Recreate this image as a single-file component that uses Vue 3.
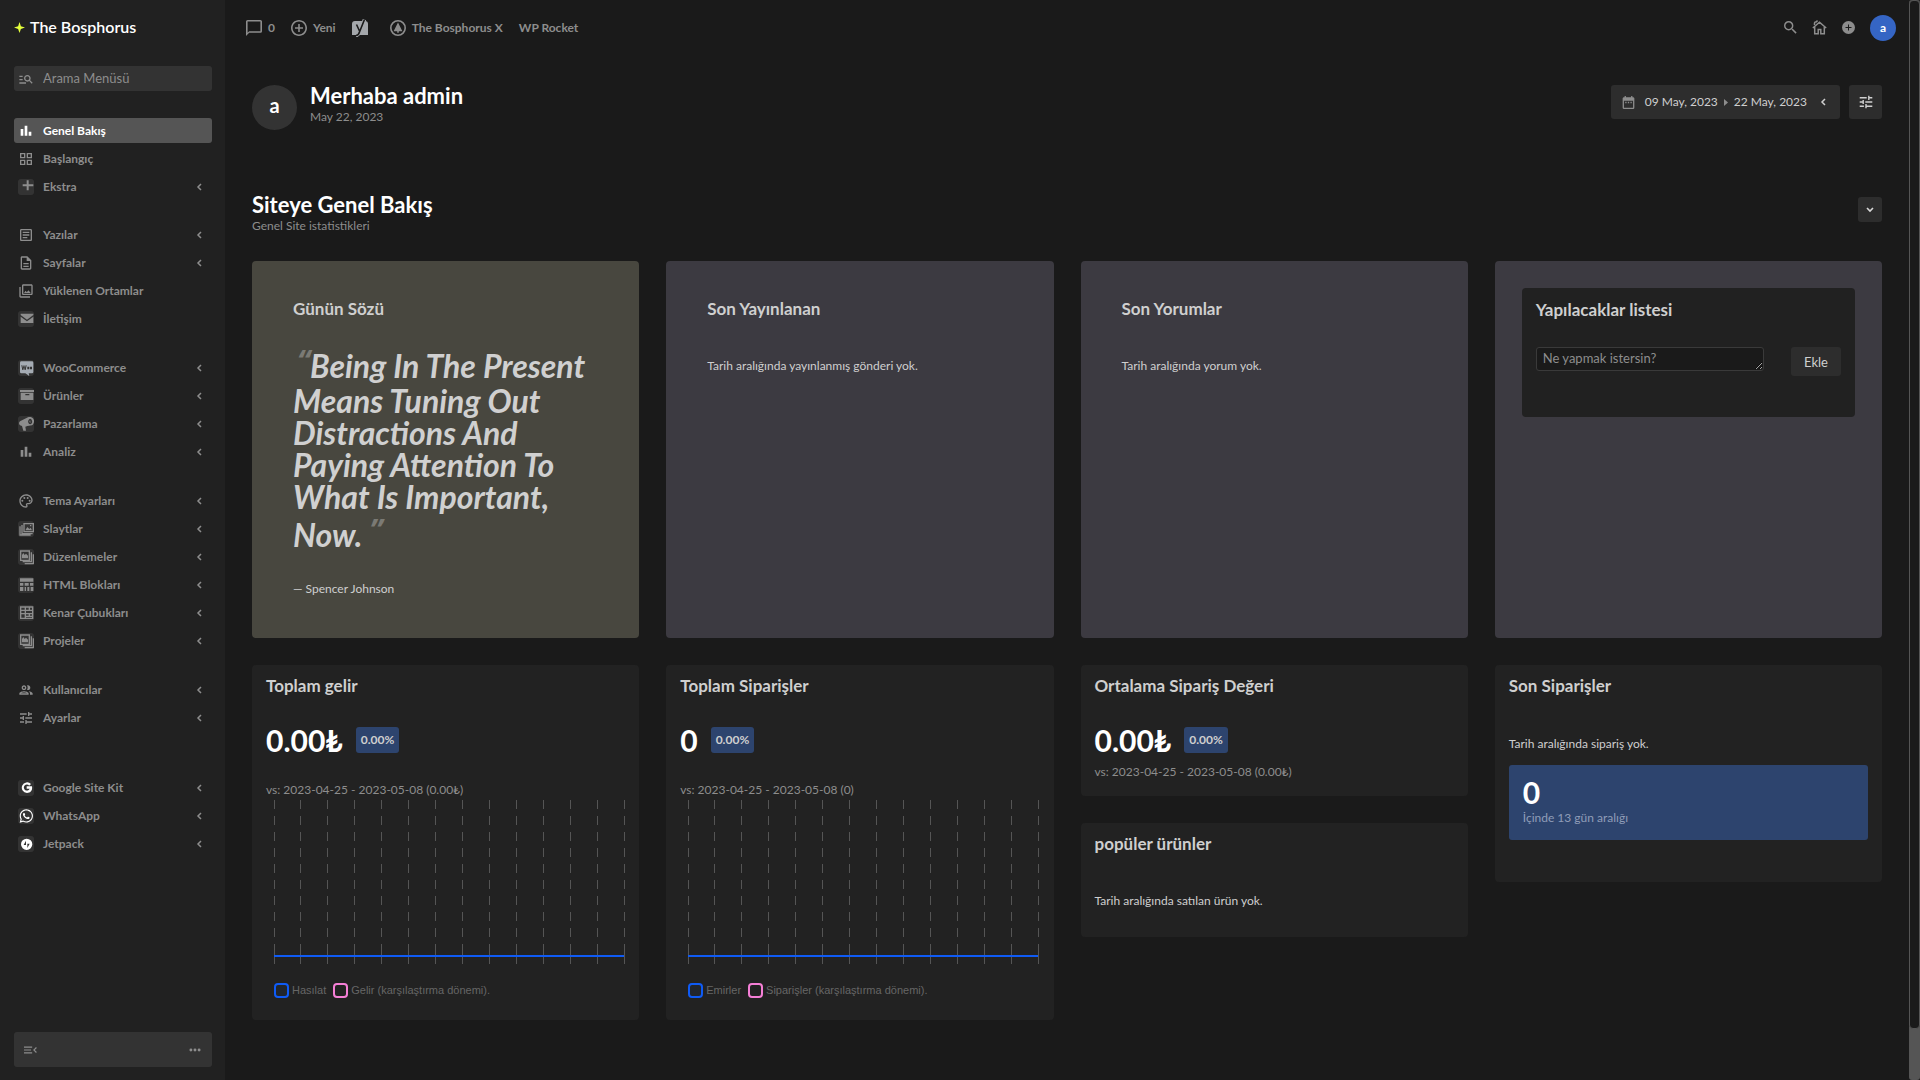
<script setup>
const icons = {
  bars: 'M4 9h4v10H4zM10 4h4v15h-4zM16 13h4v6h-4z',
  grid: 'M3 3v8h8V3H3zm6 6H5V5h4v4zm-6 4v8h8v-8H3zm6 6H5v-4h4v4zm4-16v8h8V3h-8zm6 6h-4V5h4v4zm-6 4v8h8v-8h-8zm6 6h-4v-4h4v4z',
  plus: 'M13 2h3v6h7v3h-7v6h-3v-6H7V8h6z',
  article: 'M19 5v14H5V5h14m0-2H5c-1.1 0-2 .9-2 2v14c0 1.1.9 2 2 2h14c1.1 0 2-.9 2-2V5c0-1.1-.9-2-2-2zM14 17H7v-2h7v2zm3-4H7v-2h10v2zm0-4H7V7h10v2z',
  page: 'M8 16h8v2H8zm0-4h8v2H8zm6-10H6c-1.1 0-2 .9-2 2v16c0 1.1.89 2 1.99 2H18c1.1 0 2-.9 2-2V8l-6-6zm4 18H6V4h7v5h5v11z',
  media: 'M20 4v12H8V4h12m0-2H8c-1.1 0-2 .9-2 2v12c0 1.1.9 2 2 2h12c1.1 0 2-.9 2-2V4c0-1.1-.9-2-2-2zm-8.5 9.67 1.69 2.26 2.48-3.1L19 15H9zM2 6v14c0 1.1.9 2 2 2h14v-2H4V6H2z',
  mail: 'M4 4h19v2l-9.500 7L4 6zM4 8.500l9.500 7 9.500-7V18H4z',
  woo: 'M5 2h16a2 2 0 0 1 2 2v14a2 2 0 0 1-2 2h-5l1 4-6-4H5a2 2 0 0 1-2-2V4a2 2 0 0 1 2-2zm0 6 1.500 7h1.500L9 11l1 4h1.500L13 8h-1.500l-1 4-1-4h-1l-1.200 4L6.500 8zm9 2v4h3v-4zm4 0v4h3v-4z',
  archive: 'M3 3h21v3H3zM4 7h19v11H4zM11 9v2h6V9z',
  horn: 'M3 8 15 2c2-1 6-1 8 2s1 8-2 10l-7 1-3 1 1 6H8l-2-7-3-1c-2-2-2-4 0-6zM18 4c-3 1-4 6-1 8 3 1 5-2 4-5-.5-2-1.500-3-3-3zm0 2 1 4-2-1z',
  palette: 'M12 22C6.49 22 2 17.51 2 12S6.49 2 12 2s10 4.04 10 9c0 3.31-2.690 6-6 6h-1.770c-.28 0-.5.22-.5.5 0 .12.05.23.13.33.41.47.64 1.060.64 1.670A2.500 2.500 0 0 1 12 22zm0-18c-4.410 0-8 3.590-8 8s3.590 8 8 8c.28 0 .5-.22.5-.5a.54.54 0 0 0-.14-.35c-.41-.46-.63-1.050-.63-1.650a2.500 2.500 0 0 1 2.500-2.500H16c2.210 0 4-1.790 4-4 0-3.860-3.590-7-8-7zM6.500 10a1.500 1.500 0 1 0 0 3 1.500 1.500 0 0 0 0-3zM9.500 6a1.500 1.500 0 1 0 0 3 1.500 1.500 0 0 0 0-3zM14.500 6a1.500 1.500 0 1 0 0 3 1.500 1.500 0 0 0 0-3zM17.500 10a1.500 1.500 0 1 0 0 3 1.500 1.500 0 0 0 0-3z',
  slides: 'M8 3h16v14H8zM10 5v10h12V5zM11 14l3-5 3 3 2-2 2 4zM18 6h2v2h-2zM5 6h2v12h15v2H5zM2 8h2v12h15v2H2z',
  gallery: 'M3 2h15v16H3zM5 4v12h11V4zM6 14V9l2-3 2 3 2-2 3 3v4zM19 5h2v15H7v-2h12zM22 8h2v15H10v-2h12z',
  blocks: 'M3 2h20v5H3zM3 9h5v4H3zM10 9h6v4h-6zM18 9h5v4h-5zM3 15h5v6H3zM10 15h2v6h-2zM14 15h3v6h-3zM19 15h4v6h-4z',
  widgets: 'M3 2h20v19H3zM5 4v3h5V4zM12 4v3h4V4zM18 4v3h3V4zM5 9v3h5V9zM12 9v3h9V9zM5 14v5h5v-5zM12 14v2h4v-2zM18 14v2h3v-2zM12 18v1h9v-1z',
  people: 'M9 13.750c-2.340 0-7 1.170-7 3.500V19h14v-1.750c0-2.330-4.660-3.500-7-3.500zM4.340 17c.84-.58 2.870-1.250 4.660-1.250s3.820.67 4.660 1.250H4.340zM9 12c1.930 0 3.500-1.570 3.500-3.500S10.930 5 9 5 5.500 6.570 5.500 8.500 7.070 12 9 12zm0-5c.83 0 1.500.67 1.500 1.500S9.830 10 9 10s-1.500-.67-1.500-1.500S8.170 7 9 7zm7.040 6.810c1.160.84 1.960 1.960 1.960 3.440V19h4v-1.750c0-2.020-3.500-3.170-5.960-3.440zM15 12c1.930 0 3.500-1.570 3.500-3.500S16.930 5 15 5c-.54 0-1.040.13-1.500.35.63.89 1 1.980 1 3.150s-.37 2.260-1 3.150c.46.22.96.35 1.500.35z',
  tune: 'M3 17v2h6v-2H3zM3 5v2h10V5H3zm10 16v-2h8v-2h-8v-2h-2v6h2zM7 9v2H3v2h4v2h2V9H7zm14 4v-2H11v2h10zm-6-4h2V7h4V5h-4V3h-2v6z',
  google: 'M13 9.500h8c1 6-2 10-7.500 10A8 8 0 1 1 19.500 6l-2.700 2.500a4.500 4.500 0 1 0 .7 4.500H13z',
  jetpack: 'M13 4a8.500 8.500 0 1 0 0 17 8.500 8.500 0 0 0 0-17zm-1 3v6.500H8.500zm2 11V11.500h3.500z',
  manageSearch: 'M7 9H2V7h5v2zm0 3H2v2h5v-2zm13.590 7-3.830-3.830c-.8.52-1.740.83-2.760.83-2.760 0-5-2.240-5-5s2.240-5 5-5 5 2.240 5 5c0 1.020-.31 1.960-.83 2.750L22 17.590 20.590 19zM17 11c0-1.650-1.350-3-3-3s-3 1.350-3 3 1.350 3 3 3 3-1.350 3-3zM2 19h10v-2H2v2z',
  whatsapp: 'M380.900 97.100C339 55.100 283.200 32 223.900 32c-122.400 0-222 99.600-222 222 0 39.100 10.200 77.300 29.600 111L0 480l117.700-30.900c32.400 17.700 68.900 27 106.100 27h.1c122.300 0 224.100-99.600 224.100-222 0-59.300-25.200-115-67.100-157zm-157 341.600c-33.200 0-65.700-8.900-94-25.700l-6.700-4-69.800 18.300L72 359.200l-4.400-7c-18.500-29.400-28.200-63.300-28.200-98.200 0-101.700 82.800-184.500 184.600-184.500 49.300 0 95.600 19.200 130.400 54.100 34.800 34.900 56.200 81.200 56.100 130.500 0 101.800-84.900 184.600-186.600 184.600zm101.200-138.200c-5.500-2.800-32.800-16.200-37.900-18-5.100-1.900-8.800-2.800-12.500 2.800-3.700 5.600-14.300 18-17.600 21.800-3.200 3.700-6.500 4.200-12 1.400-32.600-16.300-54-29.100-75.500-66-5.700-9.800 5.700-9.100 16.300-30.300 1.800-3.700.9-6.900-.5-9.700-1.400-2.800-12.500-30.100-17.100-41.200-4.500-10.800-9.100-9.300-12.500-9.500-3.200-.2-6.900-.2-10.600-.2-3.700 0-9.700 1.400-14.800 6.900-5.100 5.600-19.400 19-19.400 46.300 0 27.300 19.900 53.700 22.600 57.400 2.800 3.700 39.100 59.700 94.800 83.800 35.200 15.200 49 16.500 66.600 13.900 10.700-1.600 32.800-13.400 37.400-26.400 4.600-13 4.600-24.100 3.200-26.400-1.300-2.500-5-3.900-10.500-6.600z',
}

const item = (label, icon, extra = {}) => ({ label, icon, arrow: true, boxed: true, ...extra })
const plain = { boxed: false }
const groups = [
  [
    item('Genel Bakış', 'bars', { boxed: false, arrow: false, active: true }),
    item('Başlangıç', 'grid', { boxed: false, arrow: false }),
    item('Ekstra', 'plus'),
  ],
  [
    item('Yazılar', 'article', plain),
    item('Sayfalar', 'page', plain),
    item('Yüklenen Ortamlar', 'media', { boxed: false, arrow: false }),
    item('İletişim', 'mail', { arrow: false }),
  ],
  [
    item('WooCommerce', 'woo', { tint: 'pale' }),
    item('Ürünler', 'archive'),
    item('Pazarlama', 'horn'),
    item('Analiz', 'bars', plain),
  ],
  [
    item('Tema Ayarları', 'palette', plain),
    item('Slaytlar', 'slides'),
    item('Düzenlemeler', 'gallery'),
    item('HTML Blokları', 'blocks'),
    item('Kenar Çubukları', 'widgets'),
    item('Projeler', 'gallery'),
  ],
  [item('Kullanıcılar', 'people', plain), item('Ayarlar', 'tune', plain)],
  [
    item('Google Site Kit', 'google', { tint: 'white' }),
    item('WhatsApp', 'whatsapp', { tint: 'white', box: '-56 -14 540 540' }),
    item('Jetpack', 'jetpack', { tint: 'white' }),
  ],
]

const charts = [
  { title: 'Toplam gelir', value: '0.00₺', compare: 'vs: 2023-04-25 - 2023-05-08 (0.00₺)', legend: ['Hasılat', 'Gelir (karşılaştırma dönemi).'] },
  { title: 'Toplam Siparişler', value: '0', compare: 'vs: 2023-04-25 - 2023-05-08 (0)', legend: ['Emirler', 'Siparişler (karşılaştırma dönemi).'] },
]
const ticks = Array.from({ length: 14 }, (_, i) => (i / 13) * 100 + '%')
</script>

<template>
  <div class="app">
    <aside class="sidebar">
      <a href="#" class="logo">
        <svg width="11" height="11" viewBox="0 0 12 12"><path fill="#e4ff3c" d="M6 0 7.500 4.500 12 6 7.500 7.500 6 12 4.500 7.500 0 6 4.500 4.500z" /></svg>
        <span>The Bosphorus</span>
      </a>
      <label class="menu-search">
        <svg class="menu-ico" viewBox="0 0 24 24"><path :d="icons.manageSearch" /></svg>
        <input type="text" placeholder="Arama Menüsü" aria-label="Arama Menüsü" />
      </label>
      <nav class="menu">
        <ul v-for="(group, g) in groups" :key="g" class="group">
          <li v-for="entry in group" :key="entry.label">
            <a href="#" class="entry" :class="{ active: entry.active }">
              <span class="holder" :class="[{ boxed: entry.boxed }, entry.tint]">
                <svg class="menu-ico" :viewBox="entry.box || '0 0 24 24'">
                  <path fill-rule="evenodd" :d="icons[entry.icon]" />
                </svg>
              </span>
              <span class="entry-label">{{ entry.label }}</span>
              <svg v-if="entry.arrow" class="chev" viewBox="0 0 6 8"><path d="M5 1 2 4l3 3" /></svg>
            </a>
          </li>
        </ul>
      </nav>
      <div class="side-foot">
        <button type="button" aria-label="Menüyü daralt">
          <svg class="ico" viewBox="1 0 24 24"><path d="M1 18h14v-2H1v2zm0-5h12v-2H1v2zm0-7v2h14V6H1zm22 9.600L19.400 12 23 8.400 21.600 7l-5 5 5 5z" /></svg>
        </button>
        <button type="button" aria-label="Diğer">
          <svg class="ico" viewBox="0 0 24 24"><circle cx="5" cy="12" r="2.500" /><circle cx="12" cy="12" r="2.500" /><circle cx="19" cy="12" r="2.500" /></svg>
        </button>
      </div>
    </aside>

    <main class="main">
      <header class="topbar">
        <div class="top-left">
          <a href="#" class="top-link">
            <svg class="big" viewBox="2 2 20 20"><path d="M20 2H4c-1.100 0-2 .9-2 2v18l4-4h14c1.100 0 2-.9 2-2V4c0-1.100-.9-2-2-2zm0 14H6l-2 2V4h16v12z" /></svg>
            <span>0</span>
          </a>
          <a href="#" class="top-link">
            <svg class="big" viewBox="2 2 20 20"><path d="M13 7h-2v4H7v2h4v4h2v-4h4v-2h-4V7zm-1-5C6.480 2 2 6.480 2 12s4.480 10 10 10 10-4.480 10-10S17.520 2 12 2zm0 18c-4.410 0-8-3.590-8-8s3.590-8 8-8 8 3.590 8 8-3.590 8-8 8z" /></svg>
            <span>Yeni</span>
          </a>
          <a href="#" class="top-link yoast" aria-label="Yoast SEO">
            <svg class="tall" viewBox="0 0 16 18">
              <path fill="#a4a7ab" d="M3 2h10a3 3 0 0 1 3 3v11H0V5a3 3 0 0 1 3-3z" />
              <path fill="none" stroke="#a4a7ab" stroke-width="3.500" d="M12.500.5 7.500 13q-1 3.500-3.500 3.500" />
              <path fill="none" stroke="#1a1a1a" stroke-width="1.600" d="M4.500 5.500l3 6.500M12.500.5 7.500 13q-1 3.500-3.500 3.500" />
            </svg>
          </a>
          <a href="#" class="top-link">
            <svg class="big" viewBox="0 0 20 20">
              <circle cx="10" cy="10" r="9" fill="none" stroke="#8d8d8d" stroke-width="2" />
              <path d="M10 3 4.500 14H9v2h2v-2h4.500z" />
            </svg>
            <span>The Bosphorus X</span>
          </a>
          <a href="#" class="top-link">WP Rocket</a>
        </div>
        <div class="top-right">
          <button type="button" aria-label="Ara">
            <svg class="small" viewBox="3 3 18 18"><path d="M15.500 14h-.79l-.28-.27A6.470 6.470 0 0 0 16 9.500 6.500 6.500 0 1 0 9.500 16c1.610 0 3.090-.59 4.230-1.570l.27.28v.79l5 4.990L20.490 19l-4.990-5zm-6 0C7.010 14 5 11.990 5 9.500S7.010 5 9.500 5 14 7.010 14 9.500 11.990 14 9.500 14z" /></svg>
          </button>
          <a href="#" aria-label="Siteyi görüntüle">
            <svg class="home" viewBox="0 0 15 15"><path fill="none" stroke="#8d8d8d" stroke-width="1.500" d="M.8 8 7.500 2.200 14.200 8M2.700 7v6.800h3.500V9.500h2.600v4.300h3.500V7" /><path fill="none" stroke="#8d8d8d" stroke-width="1.500" d="M2.500 5V3q0-1 1-1t2-1.500" /></svg>
          </a>
          <button type="button" aria-label="Ekle">
            <svg class="small" viewBox="0 0 13 13"><circle cx="6.500" cy="6.500" r="6.500" /><path fill="#1a1a1a" d="M6 3.500h1V6h2.500v1H7v2.500H6V7H3.500V6H6z" /></svg>
          </button>
          <a href="#" class="user">a</a>
        </div>
      </header>

      <section class="welcome">
        <span class="avatar">a</span>
        <div class="welcome-text">
          <h1>Merhaba admin</h1>
          <p class="muted">May 22, 2023</p>
        </div>
        <button type="button" class="dates">
          <svg class="small" viewBox="3 2 18 20"><path fill="#8d8d8d" d="M9 11H7v2h2v-2zm4 0h-2v2h2v-2zm4 0h-2v2h2v-2zm2-7h-1V2h-2v2H8V2H6v2H5c-1.110 0-1.990.9-1.990 2L3 20a2 2 0 0 0 2 2h14c1.100 0 2-.9 2-2V6c0-1.100-.9-2-2-2zm0 16H5V9h14v11z" /><path fill="#8d8d8d" d="M4 5h16v4H4z" /></svg>
          <span class="range">
            <span>09 May, 2023</span>
            <svg width="4" height="7" viewBox="0 0 4 7"><path fill="#8d8d8d" d="M0 0l4 3.500L0 7z" /></svg>
            <span>22 May, 2023</span>
          </span>
          <svg class="chev" viewBox="0 0 6 8"><path d="M5 1 2 4l3 3" /></svg>
        </button>
        <button type="button" class="filter" aria-label="Filtreler">
          <svg class="ico" viewBox="2 2 20 20"><path fill="#d0d0d0" :d="icons.tune" /></svg>
        </button>
      </section>

      <section class="section-head">
        <div>
          <h2>Siteye Genel Bakış</h2>
          <p class="muted">Genel Site istatistikleri</p>
        </div>
        <button type="button" class="fold" aria-label="Bölümü daralt">
          <svg width="8" height="6" viewBox="0 0 8 6"><path fill="none" stroke="#d8d8d8" stroke-width="1.600" d="M1 1l3 3 3-3" /></svg>
        </button>
      </section>

      <section class="cards">
        <article class="tile quote">
          <h3>Günün Sözü</h3>
          <blockquote>
            <span class="first"><span class="mark open">“</span>Being In The Present</span>
            <span>Means Tuning Out</span>
            <span>Distractions And</span>
            <span>Paying Attention To</span>
            <span>What Is Important,</span>
            <span class="last">Now. <span class="mark">”</span></span>
          </blockquote>
          <p>— Spencer Johnson</p>
        </article>
        <article class="tile">
          <h3>Son Yayınlanan</h3>
          <p>Tarih aralığında yayınlanmış gönderi yok.</p>
        </article>
        <article class="tile">
          <h3>Son Yorumlar</h3>
          <p>Tarih aralığında yorum yok.</p>
        </article>
        <article class="tile todo">
          <form class="todo-box" @submit.prevent>
            <h3>Yapılacaklar listesi</h3>
            <div class="todo-row">
              <textarea rows="1" placeholder="Ne yapmak istersin?" aria-label="Ne yapmak istersin?"></textarea>
              <button type="submit">Ekle</button>
            </div>
          </form>
        </article>

        <article v-for="chart in charts" :key="chart.title" class="panel">
          <h3>{{ chart.title }}</h3>
          <div class="figure"><strong>{{ chart.value }}</strong><span class="badge">0.00%</span></div>
          <p class="muted spaced">{{ chart.compare }}</p>
          <div class="chart">
            <svg class="plot" width="100%" height="164">
              <g v-for="x in ticks" :key="x" class="tick">
                <line class="dashed" :x1="x" :x2="x" y1="0" y2="153" />
                <line :x1="x" :x2="x" y1="153" y2="164" />
              </g>
              <line class="series" x1="0" x2="100%" y1="156" y2="156" />
            </svg>
            <ul class="legend">
              <li><i class="swatch blue"></i>{{ chart.legend[0] }}</li>
              <li><i class="swatch pink"></i>{{ chart.legend[1] }}</li>
            </ul>
          </div>
        </article>

        <div class="stack">
          <article class="panel average">
            <h3>Ortalama Sipariş Değeri</h3>
            <div class="figure"><strong>0.00₺</strong><span class="badge">0.00%</span></div>
            <p class="muted">vs: 2023-04-25 - 2023-05-08 (0.00₺)</p>
          </article>
          <article class="panel popular">
            <h3>popüler ürünler</h3>
            <p>Tarih aralığında satılan ürün yok.</p>
          </article>
        </div>

        <article class="panel orders">
          <h3>Son Siparişler</h3>
          <p>Tarih aralığında sipariş yok.</p>
          <div class="total">
            <strong>0</strong>
            <p>İçinde 13 gün aralığı</p>
          </div>
        </article>
      </section>
    </main>

    <div class="scroll" aria-hidden="true"><div class="thumb"></div></div>
  </div>
</template>

<style>
body {
  background: #1a1a1a;
}
</style>

<style scoped>
* {
  box-sizing: border-box;
  margin: 0;
  padding: 0;
}
.app {
  display: flex;
  min-height: 100vh;
  background: #1a1a1a;
  color: #cfcfcf;
  font: 12px/18px Lato, "Noto Sans", sans-serif;
}
a {
  color: inherit;
  text-decoration: none;
}
ul {
  list-style: none;
}
button {
  border: 0;
  background: none;
  color: inherit;
  font: inherit;
}
svg {
  display: block;
  flex: none;
  fill: currentColor;
}
.muted {
  color: #8d8d8d;
}

.sidebar {
  display: flex;
  flex: none;
  flex-direction: column;
  width: 225px;
  padding: 17px 13px 13px 14px;
  background: #212121;
  color: #8d8d8d;
}
.logo {
  display: flex;
  align-items: center;
  gap: 5px;
  height: 20px;
  color: #fff;
  font-size: 16px;
  font-weight: 600;
}
.menu-search {
  display: flex;
  align-items: center;
  height: 25px;
  margin-top: 29px;
  padding-left: 4px;
  border-radius: 3px;
  background: #333;
}
.menu-search input {
  width: 100%;
  height: 21px;
  margin: 0 0 2px 9px;
  border: 0;
  outline: 0;
  background: none;
  color: #8d8d8d;
  font: 13px/18px Lato, "Noto Sans", sans-serif;
}
input::placeholder,
textarea::placeholder {
  color: #8d8d8d;
  opacity: 1;
}
.ico {
  width: 14px;
  height: 14px;
}
.small {
  width: 13px;
  height: 13px;
}
.menu-ico {
  width: 16px;
  height: 16px;
}
.menu {
  display: flex;
  flex-direction: column;
  gap: 24px;
  margin-top: 27px;
}
.group {
  display: flex;
  flex-direction: column;
  gap: 3px;
}
.group:first-child {
  margin-bottom: -1px;
}
.group:last-child {
  margin-top: 21px;
}
.entry {
  display: flex;
  align-items: center;
  height: 25px;
  padding: 0 10px 0 4px;
  border-radius: 3px;
  font-size: 12px;
  font-weight: 700;
}
.entry.active {
  background: #555;
  color: #fff;
}
.entry-label {
  flex: 1;
  margin-left: 9px;
}
.holder {
  border-radius: 3px;
}
.boxed {
  background: #333;
}
.pale {
  color: #a4abb3;
}
.white {
  color: #fff;
}
.chev {
  width: 6px;
  height: 8px;
  fill: none;
  stroke: currentColor;
  stroke-width: 1.5;
}
.side-foot {
  display: flex;
  align-items: center;
  justify-content: space-between;
  height: 35px;
  margin-top: auto;
  padding: 0 10px;
  border-radius: 3px;
  background: #333;
}

.main {
  flex: 1;
  min-width: 0;
  padding: 0 27px 40px;
}
.topbar {
  display: flex;
  align-items: center;
  justify-content: space-between;
  height: 55px;
  margin: 0 -14px 0 -6px;
  color: #8d8d8d;
  font-size: 12px;
  font-weight: 700;
}
.top-left,
.top-right,
.top-link {
  display: flex;
  align-items: center;
}
.top-left {
  gap: 16px;
}
.top-link {
  gap: 6px;
}
.yoast {
  margin-right: 6px;
}
.big {
  width: 16px;
  height: 16px;
}
.tall {
  width: 16px;
  height: 18px;
}
.top-right {
  gap: 15px;
}
.home {
  width: 15px;
  height: 15px;
}
.user {
  display: grid;
  place-items: center;
  width: 26px;
  height: 26px;
  border-radius: 50%;
  background: #3565c4;
  color: #fff;
}
.welcome {
  display: flex;
  align-items: flex-start;
  margin-top: 30px;
}
.avatar {
  display: grid;
  place-items: center;
  width: 45px;
  height: 45px;
  padding-bottom: 6px;
  border-radius: 50%;
  background: #333;
  color: #fff;
  font-size: 20px;
  font-weight: 700;
}
.welcome-text {
  flex: 1;
  margin-left: 13px;
}
h1,
h2 {
  color: #fff;
  font-size: 22px;
  font-weight: 700;
  line-height: 24px;
}
h1 {
  margin-top: -1px;
}
.dates {
  display: flex;
  align-items: center;
  height: 34px;
  padding: 0 14px 0 11px;
  border-radius: 3px;
  background: #2d2d2d;
}
.range {
  display: flex;
  align-items: center;
  gap: 6px;
  margin: 0 13px 0 10px;
}
.filter,
.fold {
  display: grid;
  place-items: center;
  border-radius: 3px;
  background: #2d2d2d;
}
.filter {
  width: 33px;
  height: 34px;
  margin-left: 9px;
}
.fold {
  width: 24px;
  height: 25px;
  margin-top: 4px;
}
.section-head {
  display: flex;
  align-items: flex-start;
  justify-content: space-between;
  margin-top: 63px;
}

.cards {
  display: grid;
  grid-template-columns: repeat(4, minmax(0, 1fr));
  align-items: start;
  gap: 27px;
  margin-top: 26px;
}
h3 {
  font-size: 17px;
  font-weight: 700;
  line-height: 20px;
}
.tile {
  align-self: stretch;
  min-height: 377px;
  padding: 38px 27px 39px 41px;
  border-radius: 4px;
  background: #3c3a41;
}
.tile h3 + p {
  margin-top: 38px;
}
.quote {
  background: #48473f;
}
blockquote {
  margin: 28px 0 23px;
  color: #d0d0d0;
  font-size: 32px;
  font-style: italic;
  font-weight: 700;
  line-height: 32px;
  white-space: nowrap;
}
blockquote > span {
  display: block;
}
blockquote .first {
  line-height: 38px;
}
blockquote .last {
  line-height: 44px;
}
.mark {
  color: #7b7a74;
  font-family: "Noto Sans", sans-serif;
  font-size: 30px;
  line-height: 0;
  vertical-align: 6px;
}
.open {
  margin-left: 4px;
}
.todo {
  padding: 27px;
}
.todo-box {
  min-height: 129px;
  padding: 12px 14px;
  border-radius: 4px;
  background: #212121;
}
.todo-row {
  display: flex;
  align-items: flex-start;
  gap: 27px;
  margin-top: 27px;
}
textarea {
  display: block;
  flex: 1;
  min-width: 0;
  height: 24px;
  padding: 1px 6px;
  border: 1px solid #3a3a3a;
  border-radius: 3px;
  background: #1a1a1a;
  color: #cfcfcf;
  font: 13px/18px Lato, "Noto Sans", sans-serif;
  overflow: hidden;
  resize: both;
}
.todo-row button {
  width: 50px;
  height: 29px;
  border-radius: 3px;
  background: #2d2d2d;
  font-size: 13px;
}

.panel {
  padding: 11px 14px 14px;
  border-radius: 4px;
  background: #222;
}
.figure {
  display: flex;
  align-items: center;
  gap: 13px;
  height: 36px;
  margin-top: 26px;
}
strong {
  color: #fff;
  font-size: 30px;
  font-weight: 700;
  line-height: 34px;
}
.badge {
  padding: 0 5px;
  border-radius: 3px;
  background: #2d446e;
  font-size: 12px;
  font-weight: 700;
  line-height: 26px;
}
.figure + .muted {
  margin-top: 5px;
}
.figure + .spaced {
  margin-top: 23px;
}
.chart {
  padding: 1px 1px 7px 8px;
}
.plot {
  overflow: visible;
  shape-rendering: crispEdges;
}
.tick {
  stroke: #555;
}
.dashed {
  stroke-dasharray: 9 7;
}
.series {
  stroke: #0f5bf5;
  stroke-width: 2;
}
.legend {
  display: flex;
  gap: 7px;
  margin-top: 17px;
  color: #666;
  font: 11px/18px "Liberation Sans", sans-serif;
}
.legend li {
  display: flex;
  align-items: center;
  gap: 3px;
}
.swatch {
  width: 15px;
  height: 15px;
  border: 2px solid #0f5bf5;
  border-radius: 4px;
  background: #21262d;
}
.swatch.pink {
  border-color: #f57fd6;
  background: #222;
}
.stack {
  display: flex;
  flex-direction: column;
  gap: 27px;
}
.average {
  min-height: 131px;
}
.popular {
  min-height: 114px;
}
.popular p {
  margin-top: 38px;
}
.orders {
  min-height: 217px;
}
.orders h3 + p {
  margin-top: 39px;
}
.total {
  min-height: 75px;
  margin-top: 12px;
  padding: 10px 14px;
  border-radius: 3px;
  background: #2d446e;
  color: #8f9db8;
}
.total strong {
  display: block;
}

.scroll {
  flex: none;
  width: 11px;
  background: #555;
  border-radius: 3px;
}
.thumb {
  height: 95.3%;
  border: 1px solid #555;
  border-radius: 4px;
  background: #1a1a1a;
}
</style>
